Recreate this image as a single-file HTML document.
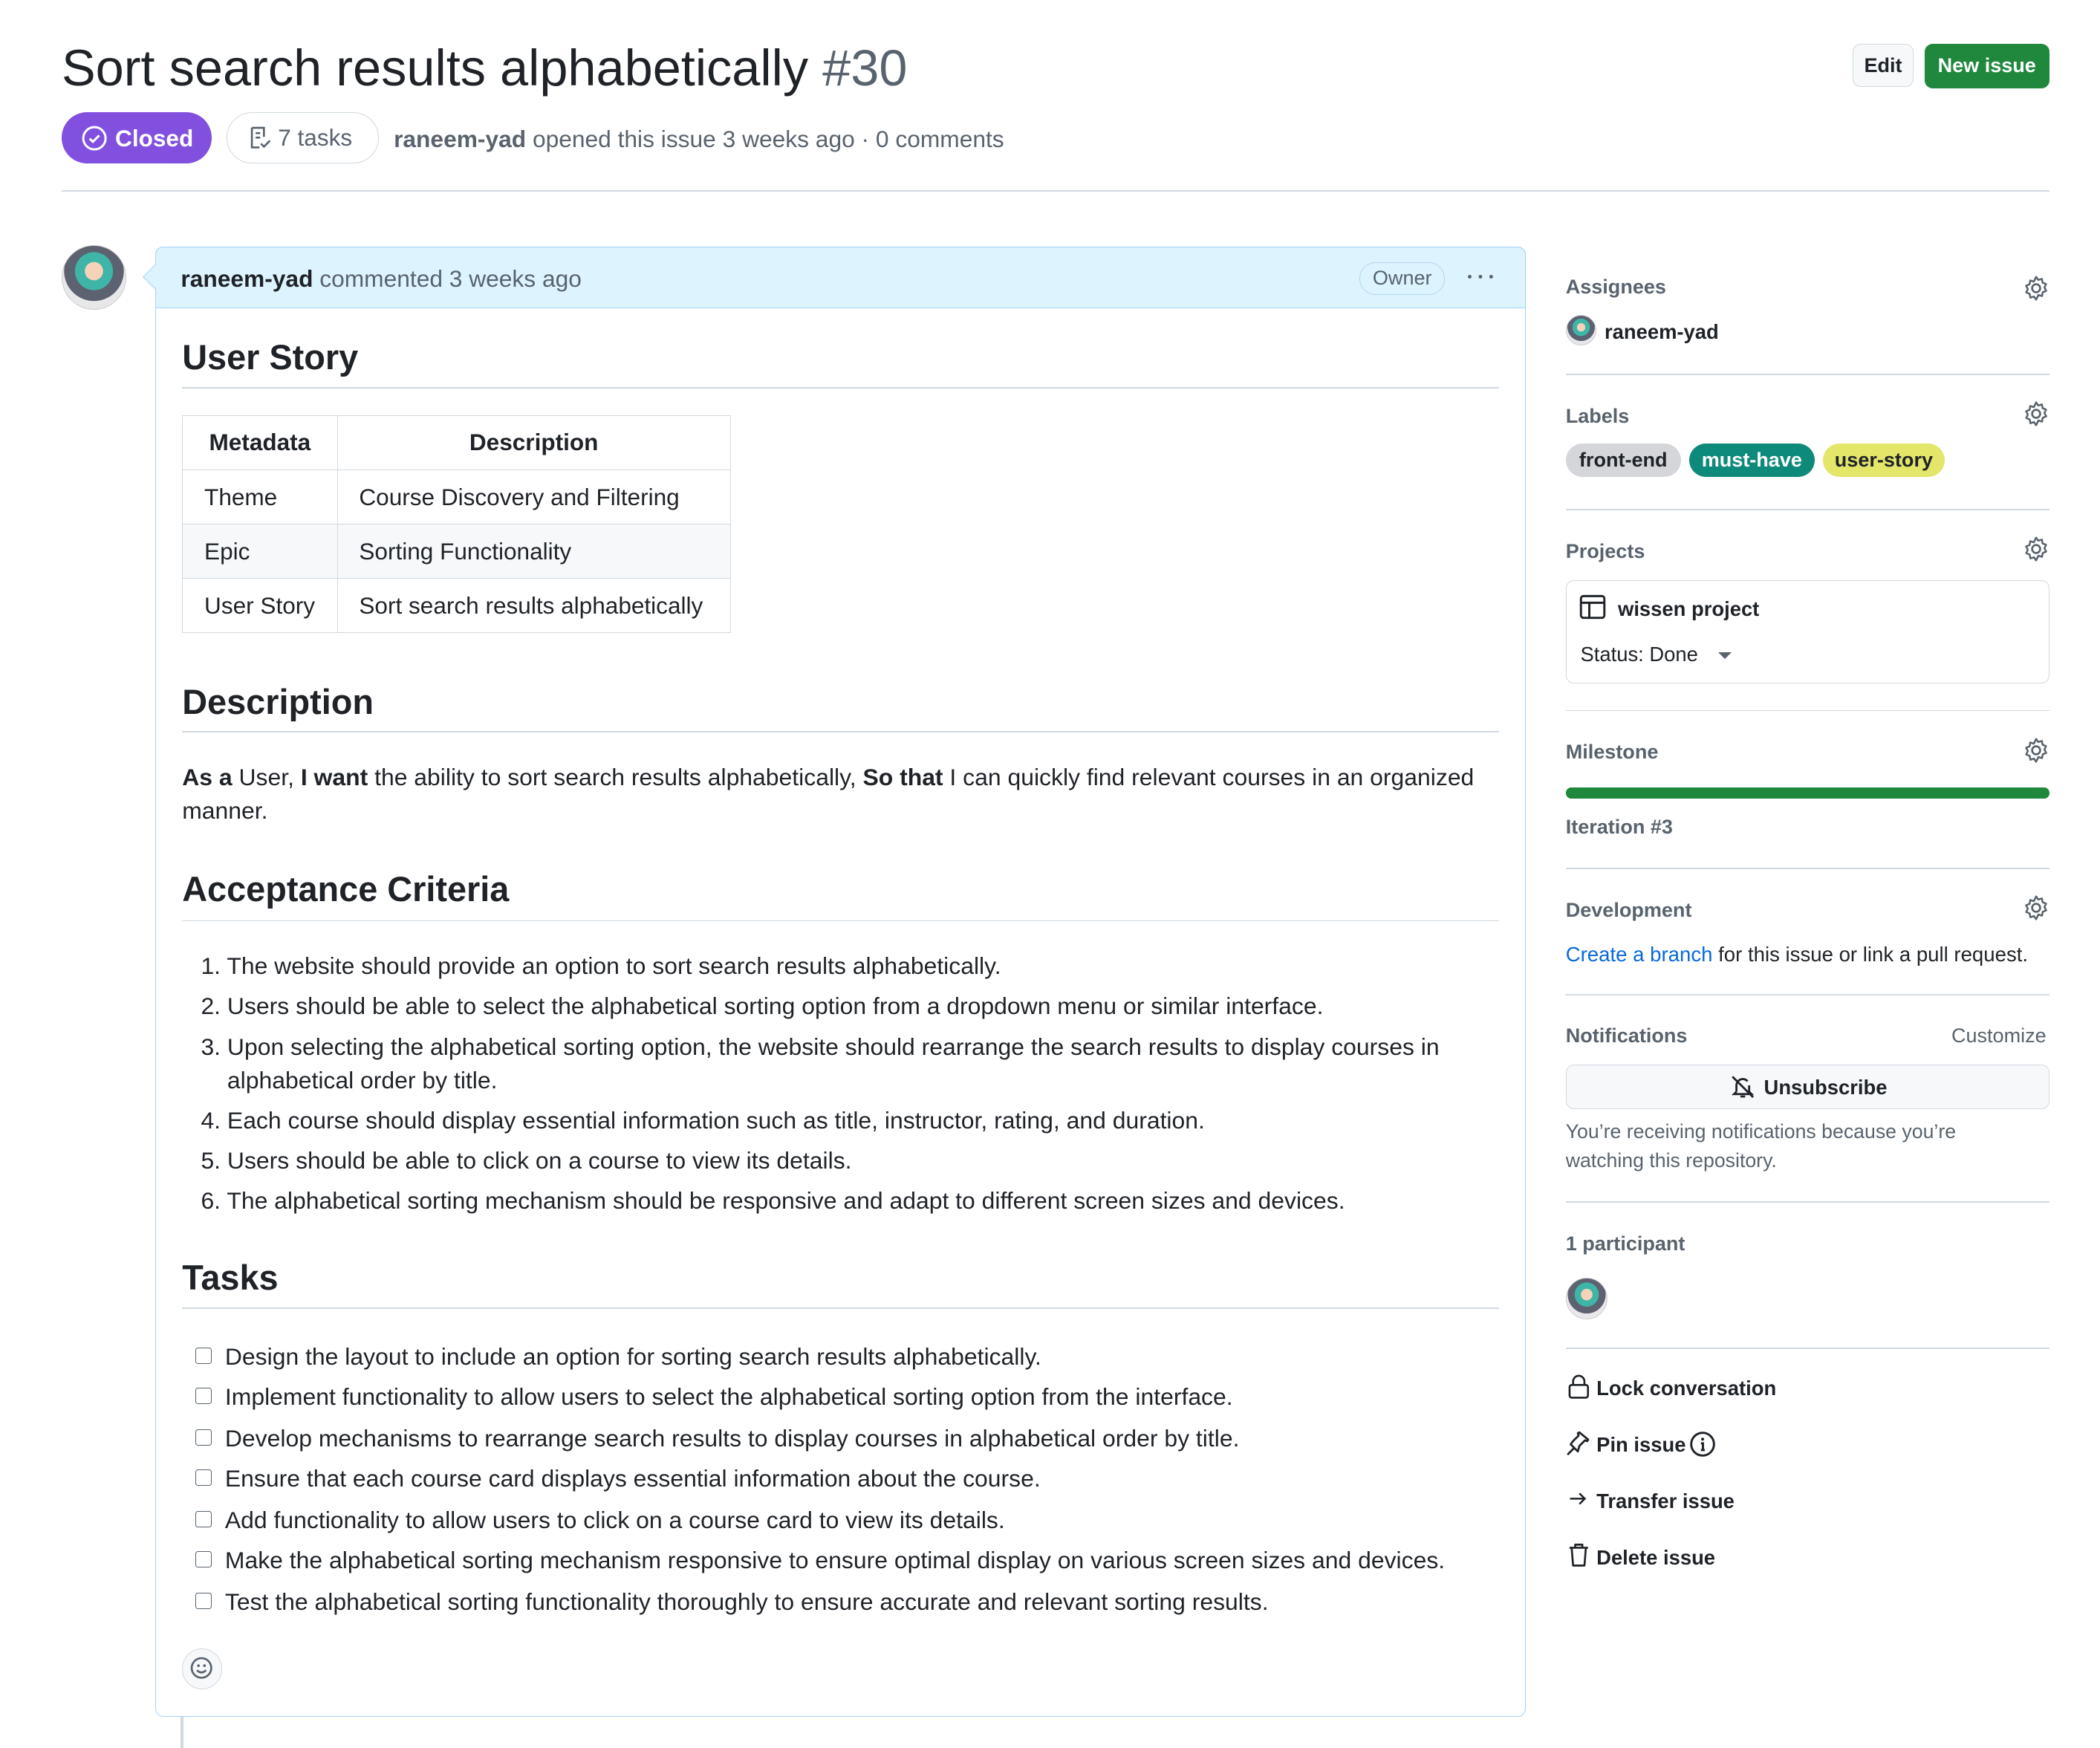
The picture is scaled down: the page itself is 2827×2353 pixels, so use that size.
<!DOCTYPE html>
<html><head><meta charset="utf-8"><style>
html,body{margin:0;padding:0;background:#fff;}
html{width:2827px;height:2352px;overflow:hidden}
#z{zoom:1.803;position:relative;width:1568px;height:1305px;font-family:"Liberation Sans",sans-serif;color:#1f2328;}
.a{position:absolute;white-space:nowrap}
.gray{color:#59636e}
.h2{position:absolute;left:136px;font-size:26px;font-weight:bold;}
.hr{position:absolute;left:136px;width:983px;height:1px;background:#d1d9e0}
.sl{position:absolute;left:1169px;font-size:15px;font-weight:bold;color:#59636e}
.sd{position:absolute;left:1169px;width:361px;height:1px;background:#d1d9e0}
.gear{position:absolute;left:1510px;width:20px;height:20px}
.li{position:absolute;left:150px;font-size:17.7px;line-height:25px}
.cb{position:absolute;left:146px;width:11px;height:11px;border:1px solid #59636e;border-radius:2px}
.ct{position:absolute;left:168px;font-size:17.7px}
.lab{position:absolute;top:331px;height:25px;line-height:25px;border-radius:13px;font-size:15px;font-weight:bold;text-align:center}
td,th{border:1px solid #d1d9e0;padding:0 16px;height:40px;font-size:17.5px;text-align:left}
th{text-align:center}
.av{position:absolute;border-radius:50%;background:radial-gradient(circle at 50% 40%,#f6d3b8 0 18%,#3fb5a8 19% 38%,#5c6270 39% 60%,#e8e8ea 61%);border:1px solid #ccc}
</style></head><body><div id="z">
<div class="a" style="left:46px;top:29px;font-size:38px">Sort search results alphabetically <span class="gray">#30</span></div>
<div class="a" style="left:1383px;top:33px;width:46px;height:32px;border:1px solid #d1d9e0;border-radius:6px;background:#f6f8fa;font-size:15px;font-weight:bold;line-height:32px;text-align:center;box-sizing:border-box">Edit</div>
<div class="a" style="left:1437px;top:33px;width:93px;height:33px;border-radius:6px;background:#1f883d;color:#fff;font-size:15px;font-weight:bold;line-height:33px;text-align:center">New issue</div>
<div class="a" style="left:46px;top:84px;width:112px;height:38px;border-radius:19px;background:#8250df;color:#fff;font-size:17.5px;font-weight:bold;line-height:39px">
<svg style="position:absolute;left:15px;top:10px" width="19" height="19" viewBox="0 0 16 16"><circle cx="8" cy="8" r="7" fill="none" stroke="#fff" stroke-width="1.4"/><path d="M5 8.2l2 2 4-4" fill="none" stroke="#fff" stroke-width="1.4"/></svg><span style="position:absolute;left:40px">Closed</span></div>
<div class="a" style="left:169px;top:84px;width:114px;height:38px;border:1px solid #d1d9e0;border-radius:19px;box-sizing:border-box;font-size:17.5px;line-height:37px;color:#59636e">
<svg style="position:absolute;left:15px;top:9px" width="18" height="18" viewBox="0 0 16 16"><path d="M3 1.5h8v6M3 1.5v13h5M5.5 5h3M5.5 8h3M9 12l2 2 4-4" fill="none" stroke="#59636e" stroke-width="1.3"/></svg><span style="position:absolute;left:38px">7 tasks</span></div>
<div class="a gray" style="left:294px;top:94px;font-size:17.6px"><b>raneem-yad</b> opened this issue 3 weeks ago · 0 comments</div>
<div class="a" style="left:46px;top:142px;width:1484px;height:1px;background:#d1d9e0"></div>

<div class="av" style="left:46px;top:183px;width:47px;height:47px"></div>
<div class="a" style="left:116px;top:184px;width:1023px;height:1098px;border:1px solid #a5d2f5;border-radius:6px;box-sizing:border-box"></div>
<div class="a" style="left:116px;top:184px;width:1023px;height:46px;background:#ddf4ff;border:1px solid #a5d2f5;border-radius:6px 6px 0 0;box-sizing:border-box"></div>
<div class="a" style="left:109px;top:200px;width:12px;height:12px;background:#ddf4ff;border-left:1px solid #a5d2f5;border-bottom:1px solid #a5d2f5;transform:rotate(45deg)"></div>
<div class="a" style="left:135px;top:198px;font-size:17.6px;color:#59636e"><b style="color:#1f2328">raneem-yad</b> commented 3 weeks ago</div>
<div class="a" style="left:1015px;top:196px;width:64px;height:24px;border:1px solid #b6d4ea;border-radius:12px;box-sizing:border-box;font-size:15px;color:#59636e;text-align:center;line-height:23px">Owner</div>
<div class="a" style="left:1096px;top:205px;width:3px;height:3px;border-radius:50%;background:#59636e;box-shadow:8px 0 #59636e,16px 0 #59636e"></div>

<div class="h2" style="top:252px">User Story</div><div class="hr" style="top:289px"></div>
<table class="a" style="left:136px;top:310px;border-collapse:collapse">
<tr><th style="width:83px">Metadata</th><th style="width:261px">Description</th></tr>
<tr><td>Theme</td><td>Course Discovery and Filtering</td></tr>
<tr style="background:#f6f8fa"><td>Epic</td><td>Sorting Functionality</td></tr>
<tr><td>User Story</td><td>Sort search results alphabetically</td></tr></table>

<div class="h2" style="top:509px">Description</div><div class="hr" style="top:546px"></div>
<div class="a" style="left:136px;top:568px;font-size:17.7px;line-height:25px;white-space:normal;width:985px"><b>As a</b> User, <b>I want</b> the ability to sort search results alphabetically, <b>So that</b> I can quickly find relevant courses in an organized manner.</div>

<div class="h2" style="top:649px">Acceptance Criteria</div><div class="hr" style="top:687px"></div>
<div class="li" style="top:709px">1. The website should provide an option to sort search results alphabetically.</div>
<div class="li" style="top:739px">2. Users should be able to select the alphabetical sorting option from a dropdown menu or similar interface.</div>
<div class="li" style="top:769px">3. Upon selecting the alphabetical sorting option, the website should rearrange the search results to display courses in<br>&nbsp;&nbsp;&nbsp;&nbsp;alphabetical order by title.</div>
<div class="li" style="top:824px">4. Each course should display essential information such as title, instructor, rating, and duration.</div>
<div class="li" style="top:854px">5. Users should be able to click on a course to view its details.</div>
<div class="li" style="top:884px">6. The alphabetical sorting mechanism should be responsive and adapt to different screen sizes and devices.</div>

<div class="h2" style="top:939px">Tasks</div><div class="hr" style="top:976px"></div>
<div class="cb" style="top:1006px"></div><div class="ct" style="top:1003px">Design the layout to include an option for sorting search results alphabetically.</div>
<div class="cb" style="top:1036px"></div><div class="ct" style="top:1033px">Implement functionality to allow users to select the alphabetical sorting option from the interface.</div>
<div class="cb" style="top:1067px"></div><div class="ct" style="top:1064px">Develop mechanisms to rearrange search results to display courses in alphabetical order by title.</div>
<div class="cb" style="top:1097px"></div><div class="ct" style="top:1094px">Ensure that each course card displays essential information about the course.</div>
<div class="cb" style="top:1128px"></div><div class="ct" style="top:1125px">Add functionality to allow users to click on a course card to view its details.</div>
<div class="cb" style="top:1158px"></div><div class="ct" style="top:1155px">Make the alphabetical sorting mechanism responsive to ensure optimal display on various screen sizes and devices.</div>
<div class="cb" style="top:1189px"></div><div class="ct" style="top:1186px">Test the alphabetical sorting functionality thoroughly to ensure accurate and relevant sorting results.</div>
<div class="a" style="left:136px;top:1231px;width:30px;height:30px;border:1px solid #d1d9e0;border-radius:50%;box-sizing:border-box;background:#f6f8fa"><svg style="position:absolute;left:5px;top:5px" width="18" height="18" viewBox="0 0 16 16"><circle cx="8" cy="8" r="6.5" fill="none" stroke="#59636e" stroke-width="1.3"/><circle cx="6" cy="6.5" r=".9" fill="#59636e"/><circle cx="10" cy="6.5" r=".9" fill="#59636e"/><path d="M5 9.5q3 3 6 0" fill="none" stroke="#59636e" stroke-width="1.3"/></svg></div>
<div class="a" style="left:135px;top:1282px;width:2px;height:23px;background:#d1d9e0"></div>

<svg width="0" height="0" style="position:absolute"><defs><g id="g"><circle cx="10" cy="10" r="3" fill="none" stroke="#59636e" stroke-width="1.5"/><path d="M10 1.5l1.6 2.3 2.7-.8.5 2.8 2.6 1.1-1.2 2.5 1.3 2.5-2.6 1.1-.5 2.8-2.7-.8L10 18.5l-1.6-2.3-2.7.8-.5-2.8-2.6-1.1 1.2-2.5-1.3-2.5 2.6-1.1.5-2.8 2.7.8z" fill="none" stroke="#59636e" stroke-width="1.4" stroke-linejoin="round"/></g></defs></svg>
<div class="sl" style="top:206px">Assignees</div><svg class="gear" style="top:205px"><use href="#g"/></svg>
<div class="av" style="left:1169px;top:235px;width:22px;height:22px"></div>
<div class="a" style="left:1198px;top:239px;font-size:15.2px;font-weight:bold">raneem-yad</div>
<div class="sd" style="top:279px"></div>
<div class="sl" style="top:302px">Labels</div><svg class="gear" style="top:299px"><use href="#g"/></svg>
<div class="lab" style="left:1169px;width:86px;background:#d4d6d9">front-end</div>
<div class="lab" style="left:1261px;width:94px;background:#0e8a7a;color:#fff">must-have</div>
<div class="lab" style="left:1361px;width:91px;background:#e4e669">user-story</div>
<div class="sd" style="top:380px"></div>
<div class="sl" style="top:403px">Projects</div><svg class="gear" style="top:400px"><use href="#g"/></svg>
<div class="a" style="left:1169px;top:433px;width:361px;height:77px;border:1px solid #d1d9e0;border-radius:6px;box-sizing:border-box"></div>
<svg class="a" style="left:1179px;top:443px" width="20" height="20" viewBox="0 0 16 16"><rect x="1" y="1.5" width="14" height="13" rx="1.5" fill="none" stroke="#1f2328" stroke-width="1.3"/><path d="M1 5.5h14M6 5.5v9" stroke="#1f2328" stroke-width="1.3"/></svg>
<div class="a" style="left:1208px;top:446px;font-size:15.2px;font-weight:bold">wissen project</div>
<div class="a" style="left:1180px;top:480px;font-size:15.2px">Status: Done</div>
<div class="a" style="left:1283px;top:487px;border-left:5px solid transparent;border-right:5px solid transparent;border-top:5px solid #59636e"></div>
<div class="sd" style="top:530px"></div>
<div class="sl" style="top:553px">Milestone</div><svg class="gear" style="top:550px"><use href="#g"/></svg>
<div class="a" style="left:1169px;top:588px;width:361px;height:8px;border-radius:4px;background:#1f883d"></div>
<div class="sl" style="top:609px">Iteration #3</div>
<div class="sd" style="top:648px"></div>
<div class="sl" style="top:671px">Development</div><svg class="gear" style="top:668px"><use href="#g"/></svg>
<div class="a" style="left:1169px;top:704px;font-size:15.3px"><span style="color:#0969da">Create a branch</span> for this issue or link a pull request.</div>
<div class="sd" style="top:742px"></div>
<div class="sl" style="top:765px">Notifications</div>
<div class="a gray" style="left:1457px;top:765px;font-size:15px">Customize</div>
<div class="a" style="left:1169px;top:795px;width:361px;height:33px;border:1px solid #d1d9e0;border-radius:6px;background:#f6f8fa;box-sizing:border-box"></div>
<svg class="a" style="left:1292px;top:802px" width="19" height="19" viewBox="0 0 16 16"><path d="M4 11V7a4 4 0 0 1 7-2.6M12 7v4l1.5 1.5h-11L4 11M6.5 14h3M1.5 1.5l13 13" fill="none" stroke="#1f2328" stroke-width="1.3"/></svg>
<div class="a" style="left:1317px;top:803px;font-size:15.2px;font-weight:bold">Unsubscribe</div>
<div class="a gray" style="left:1169px;top:834px;font-size:14.8px;line-height:22px">You’re receiving notifications because you’re<br>watching this repository.</div>
<div class="sd" style="top:897px"></div>
<div class="sl" style="top:920px">1 participant</div>
<div class="av" style="left:1169px;top:954px;width:30px;height:30px"></div>
<div class="sd" style="top:1006px"></div>
<svg class="a" style="left:1170px;top:1026px" width="17" height="19" viewBox="0 0 16 18"><rect x="1.5" y="7.5" width="13" height="9" rx="1.5" fill="none" stroke="#1f2328" stroke-width="1.4"/><path d="M4 7.5V5a4 4 0 0 1 8 0v2.5" fill="none" stroke="#1f2328" stroke-width="1.4"/></svg>
<div class="a" style="left:1192px;top:1028px;font-size:15.2px;font-weight:bold">Lock conversation</div>
<svg class="a" style="left:1169px;top:1068px" width="19" height="19" viewBox="0 0 16 16"><path d="M1 15l4.5-4.5M3 8.5l4.5 4.5 1-3.5 3.5-3.5 1.5.5.5-1L8.5 1l-1 .5.5 1.5-3.5 3.5z" fill="none" stroke="#1f2328" stroke-width="1.3" stroke-linejoin="round"/></svg>
<div class="a" style="left:1192px;top:1070px;font-size:15.2px;font-weight:bold">Pin issue</div>
<svg class="a" style="left:1261px;top:1068px" width="20" height="20" viewBox="0 0 16 16"><circle cx="8" cy="8" r="6.8" fill="none" stroke="#1f2328" stroke-width="1.3"/><circle cx="8" cy="5" r=".9" fill="#1f2328"/><path d="M7 7.5h1.2v4M7 11.5h2.3" stroke="#1f2328" stroke-width="1.3" fill="none"/></svg>
<svg class="a" style="left:1170px;top:1111px" width="16" height="16" viewBox="0 0 16 16"><path d="M2 8h11M9 4l4 4-4 4" fill="none" stroke="#1f2328" stroke-width="1.4"/></svg>
<div class="a" style="left:1192px;top:1112px;font-size:15.2px;font-weight:bold">Transfer issue</div>
<svg class="a" style="left:1170px;top:1151px" width="17" height="20" viewBox="0 0 16 18"><path d="M1.5 4h13M5.5 4V1.8h5V4M3 4l1 12.5h8L13 4" fill="none" stroke="#1f2328" stroke-width="1.4" stroke-linejoin="round"/></svg>
<div class="a" style="left:1192px;top:1154px;font-size:15.2px;font-weight:bold">Delete issue</div>
</div></body></html>
